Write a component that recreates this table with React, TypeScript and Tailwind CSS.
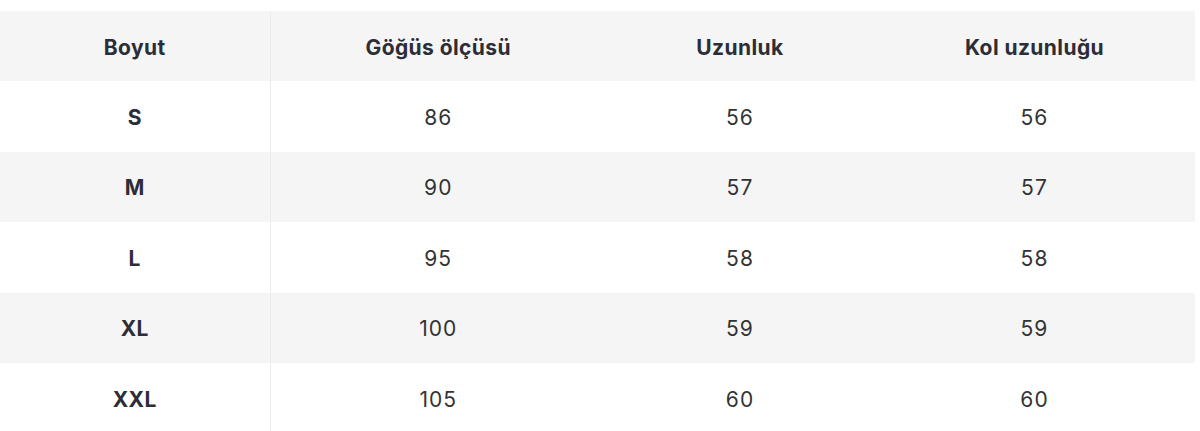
const rows = [
  { size: 'S', chest: '86', length: '56', sleeve: '56' },
  { size: 'M', chest: '90', length: '57', sleeve: '57' },
  { size: 'L', chest: '95', length: '58', sleeve: '58' },
  { size: 'XL', chest: '100', length: '59', sleeve: '59' },
  { size: 'XXL', chest: '105', length: '60', sleeve: '60' },
];

export default function App() {
  return (
    <div className="bg-white pt-[11px] pr-[5px] font-['Inter',sans-serif]">
      <table className="w-[1195px] table-fixed border-collapse text-[21px] leading-none">
        <colgroup>
          <col className="w-[270px]" />
          <col className="w-[336px]" />
          <col className="w-[268px]" />
          <col className="w-[321px]" />
        </colgroup>
        <thead className="bg-[#f5f5f6]">
          <tr className="h-[70px] text-[#2c2d37] tracking-[0.02em]">
            <th className="border-r border-[#ebebeb] pt-[2px] font-bold">Boyut</th>
            <th className="pt-[2px] font-bold">Göğüs ölçüsü</th>
            <th className="pt-[2px] font-bold">Uzunluk</th>
            <th className="pt-[2px] font-bold">Kol uzunluğu</th>
          </tr>
        </thead>
        <tbody>
          {rows.map((r, i) => (
            <tr key={r.size} className={`h-[70.5px] text-center text-[#333] tracking-[0.05em] ${i % 2 === 1 ? 'bg-[#f5f5f6]' : 'bg-white'}`}>
              <td className="border-r border-[#ebebeb] pt-[2px] font-bold tracking-[0.02em] text-[#2c2d37]">{r.size}</td>
              <td className="pt-[2px]">{r.chest}</td>
              <td className="pt-[2px]">{r.length}</td>
              <td className="pt-[2px]">{r.sleeve}</td>
            </tr>
          ))}
        </tbody>
      </table>
    </div>
  );
}
